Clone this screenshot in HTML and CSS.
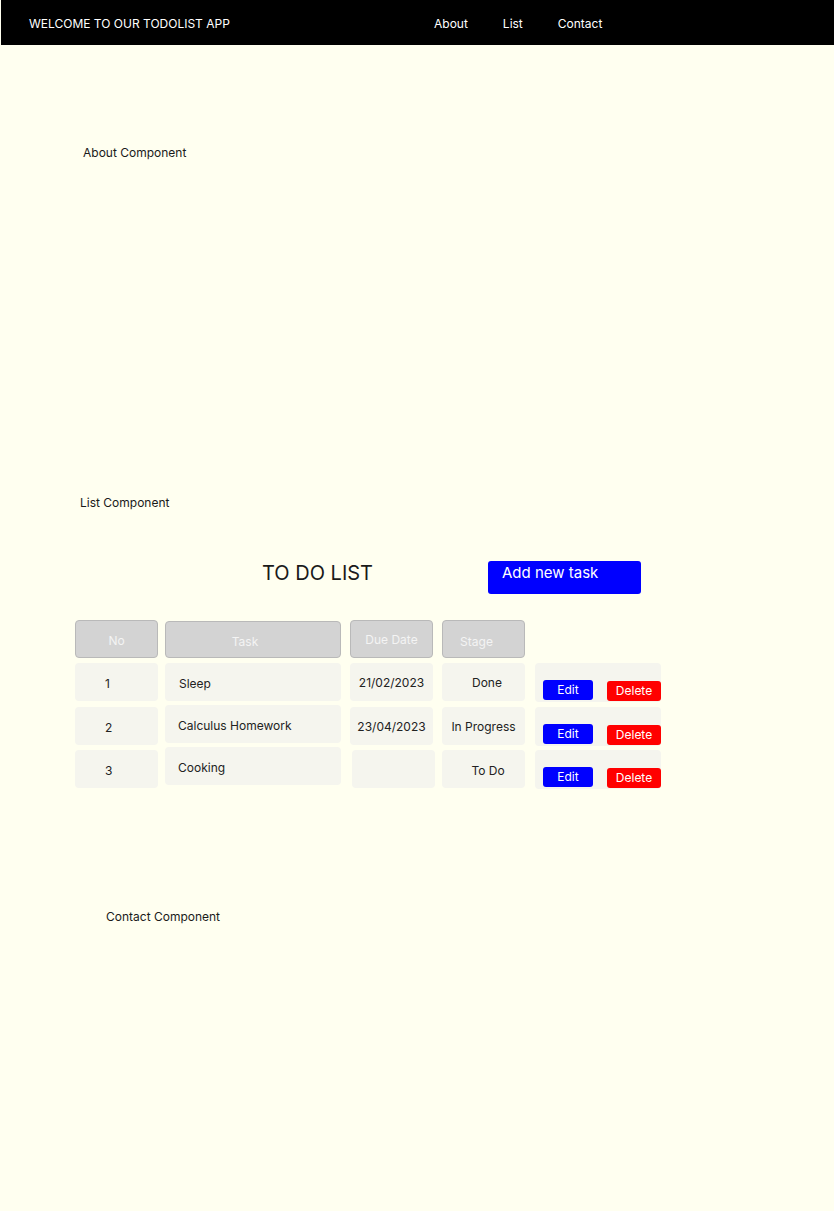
FILE: index.html
```html
<!DOCTYPE html>
<html lang="en">
<head>
<meta charset="utf-8">
<title>Todolist App</title>
<link rel="stylesheet" href="styles.css">
</head>
<body>
<header class="topbar">
  <div class="brand">WELCOME TO OUR TODOLIST APP</div>
  <nav class="nav">
    <a class="nav-link" href="#about">About</a>
    <a class="nav-link" href="#list">List</a>
    <a class="nav-link" href="#contact">Contact</a>
  </nav>
</header>

<section class="about" id="about">
  <p class="label about-label">About Component</p>
</section>

<section class="list" id="list">
  <p class="label list-label">List Component</p>
  <div class="title-row">
    <h1 class="title">TO DO LIST</h1>
    <button class="add-btn">Add new task</button>
  </div>

  <div class="table">
    <div class="th th-no">No</div>
    <div class="th th-task">Task</div>
    <div class="th th-date">Due Date</div>
    <div class="th th-stage">Stage</div>
    <div class="th-empty"></div>

    <div class="td td-no r1">1</div>
    <div class="td td-task r1">Sleep</div>
    <div class="td td-date r1">21/02/2023</div>
    <div class="td td-stage r1 st-done">Done</div>
    <div class="td td-actions r1"><button class="btn-edit">Edit</button><button class="btn-del">Delete</button></div>

    <div class="td td-no r2">2</div>
    <div class="td td-task r2 shift1">Calculus Homework</div>
    <div class="td td-date r2">23/04/2023</div>
    <div class="td td-stage r2">In Progress</div>
    <div class="td td-actions r2"><button class="btn-edit">Edit</button><button class="btn-del">Delete</button></div>

    <div class="td td-no r3">3</div>
    <div class="td td-task r3 shift2">Cooking</div>
    <div class="td td-date r3 date-empty"></div>
    <div class="td td-stage r3 st-todo">To Do</div>
    <div class="td td-actions r3"><button class="btn-edit">Edit</button><button class="btn-del">Delete</button></div>
  </div>
</section>

<section class="contact" id="contact">
  <p class="label contact-label">Contact Component</p>
</section>
</body>
</html>
```
FILE: styles.css
```css
* { box-sizing: border-box; }

html, body {
  margin: 0;
  padding: 0;
  background: #FFFFF0;
  font-family: Inter, "Noto Sans", Arial, sans-serif;
  color: #1a1a1a;
}

body { min-height: 1211px; }

.topbar {
  margin-left: 1px;
  height: 45px;
  background: #000;
  color: #fff;
  display: flex;
  align-items: center;
  padding: 2px 0 0 28px;
  font-size: 12px;
}

.brand { width: 405px; }

.nav { display: flex; }
.nav-link {
  color: #fff;
  text-decoration: none;
  font-size: 12px;
}
.nav-link:nth-child(1) { margin-right: 35px; }
.nav-link:nth-child(2) { margin-right: 35px; }

.label {
  margin: 0;
  font-size: 12px;
  line-height: 15px;
}

.about { padding: 100px 0 0 83px; }

.list { padding-top: 335px; }
.list-label { padding-left: 80px; }

.title-row {
  display: flex;
  align-items: flex-start;
  margin-top: 51px;
  padding-left: 262px;
}

.title {
  margin: 0;
  font-weight: 400;
  font-size: 20px;
  line-height: 24px;
  width: 226px;
}

.add-btn {
  width: 153px;
  height: 33px;
  background: #0000FF;
  color: #fff;
  border: none;
  border-radius: 3px;
  font-family: inherit;
  font-size: 15px;
  line-height: 18px;
  text-align: left;
  padding: 3px 0 0 14px;
  display: flex;
  align-items: flex-start;
}

.table {
  margin: 26px 0 0 75px;
  display: grid;
  grid-template-columns: 83px 176px 83px 83px 126px;
  column-gap: 7px;
  row-gap: 5px;
  font-size: 12px;
}

.th, .td {
  height: 38px;
  border-radius: 4px;
  display: flex;
  align-items: center;
}

.th {
  background: #D3D3D3;
  border: 1px solid #B9B9B9;
  color: #F4F4F4;
  justify-content: center;
  padding-top: 3px;
}
.th-task { margin-top: 1px; height: 37px; padding-right: 16px; padding-top: 3px; }
.th-date { padding-top: 1px; }
.th-stage { padding-right: 14px; padding-top: 4px; }

.td {
  background: #F5F5EE;
  color: #222;
  padding-top: 3px;
}
.th-date, .td-date { margin-left: 2px; width: 83px; }
.th-stage, .td-stage { margin-left: 4px; width: 83px; }
.td-actions { margin-left: 7px; width: 126px; }

.r3 { margin-top: -1px; }

.td-no { padding-left: 30px; }
.td-task { padding-left: 14px; }
.td-task.r2, .td-task.r3 { padding-left: 13px; }
.td-date { justify-content: center; padding-top: 0; }
.td-stage { justify-content: center; padding-top: 1px; }
.st-done { padding-left: 7px; }
.st-todo { padding-left: 9px; padding-top: 3px; }
.date-empty { margin-left: 4px; }

.td-task.shift1 { margin-top: -2px; }
.td-task.shift2 { margin-top: -4px; }

.td-actions {
  align-items: flex-start;
  padding: 17px 0 0 8px;
  height: 39px;
}

.btn-edit, .btn-del {
  border: none;
  color: #fff;
  font-family: inherit;
  font-size: 12px;
  height: 20px;
  border-radius: 3px;
  padding: 0;
  line-height: 20px;
}
.btn-edit { background: #0000FF; width: 50px; }
.btn-del { background: #FF0000; width: 54px; margin-left: 14px; margin-top: 1px; }

.contact { padding: 120px 0 0 106px; }
```
